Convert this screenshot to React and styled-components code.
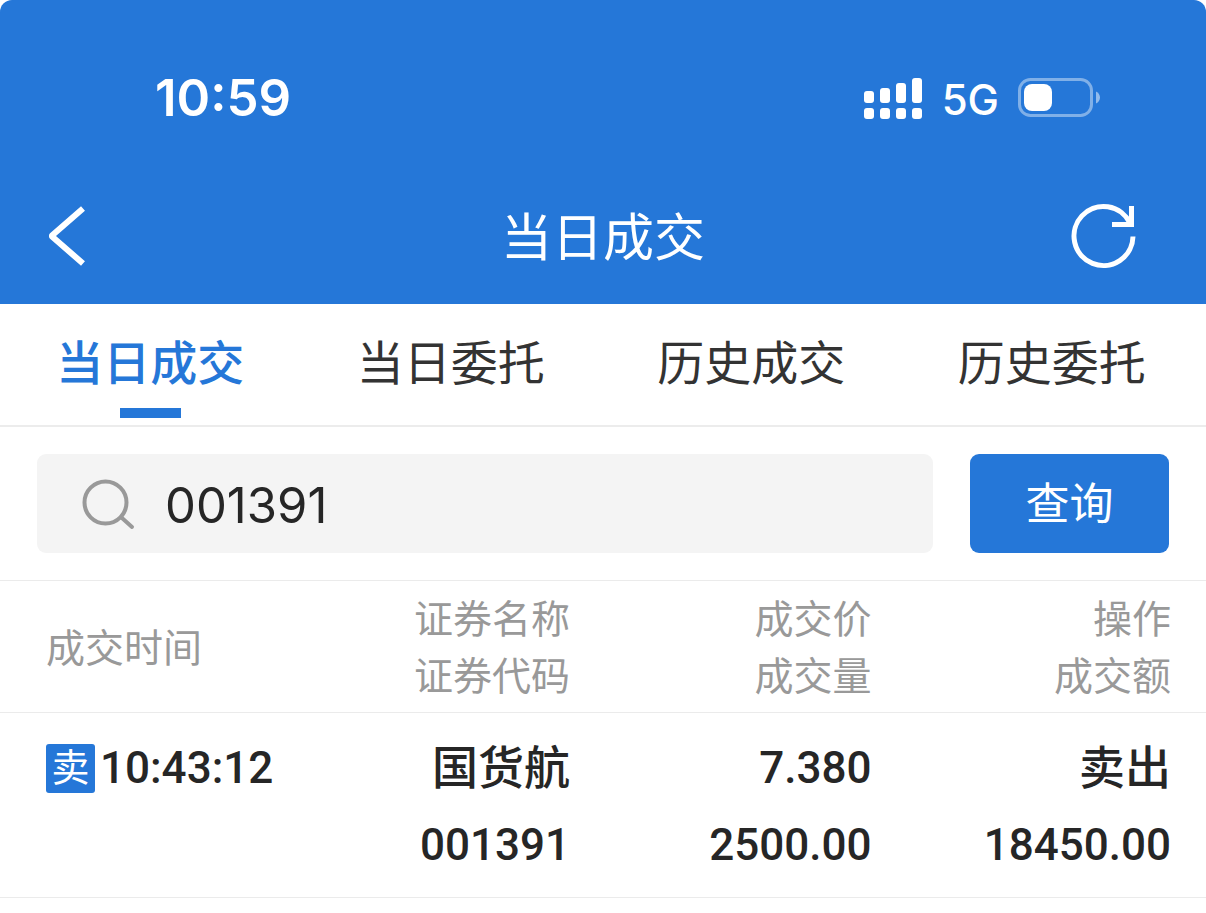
import React, { useState } from "react";
import styled, { createGlobalStyle } from "styled-components";

const blue = "#2577d8";
const cjk = '"Noto Sans CJK SC", sans-serif';

const GlobalStyle = createGlobalStyle`
  * { box-sizing: border-box; }
  body { margin: 0; background: #fff; color: #262626; font-family: ${cjk}; }
  button, input { font: inherit; border: 0; padding: 0; margin: 0; background: none; color: inherit; }
  svg { display: block; flex: none; }
`;

const Header = styled.header`
  background: ${blue};
  color: #fff;
  border-radius: 12px 12px 0 0;
`;

const StatusBar = styled.div`
  display: flex;
  align-items: center;
  justify-content: space-between;
  height: 168px;
  padding: 28px 105px 0 155px;
  font-family: Inter, sans-serif;
`;

const Clock = styled.time`
  font-size: 51px;
  font-weight: 600;
  line-height: 60px;
`;

const Indicators = styled.div`
  display: flex;
  align-items: center;
  gap: 19px;
`;

const Network = styled.span`
  padding-top: 4px;
  font-size: 42px;
  font-weight: 500;
  line-height: 48px;
`;

const TitleBar = styled.div`
  display: flex;
  align-items: center;
  justify-content: space-between;
  height: 136px;
  padding: 0 68px 0 46px;
`;

const IconButton = styled.button`
  display: flex;
  flex: none;
  justify-content: ${(p) => (p.$end ? "flex-end" : "flex-start")};
  width: 88px;
  cursor: pointer;
`;

const Title = styled.h1`
  flex: 1;
  margin: 0;
  padding: 0 0 4px 22px;
  text-align: center;
  font-size: 51px;
  font-weight: 400;
  line-height: 72px;
`;

const Tabs = styled.nav`
  display: grid;
  grid-template-columns: repeat(4, 1fr);
  padding-right: 4px;
  border-bottom: 2px solid #ececec;
`;

const Tab = styled.a`
  display: flex;
  flex-direction: column;
  align-items: center;
  gap: 10px;
  height: 121px;
  padding-top: 24px;
  color: ${(p) => (p.$active ? blue : "#333")};
  font-size: 47px;
  font-weight: ${(p) => (p.$active ? 500 : 400)};
  line-height: 64px;
  text-decoration: none;

  &::after {
    content: "";
    width: 61px;
    height: 10px;
    margin-top: 6px;
    background: ${(p) => (p.$active ? blue : "transparent")};
  }
`;

const SearchForm = styled.form`
  display: flex;
  gap: 37px;
  padding: 27px 37px;
`;

const SearchBox = styled.label`
  display: flex;
  flex: 1;
  align-items: center;
  gap: 28px;
  min-width: 0;
  height: 99px;
  padding: 0 44px;
  border-radius: 9px;
  background: #f4f4f4;
`;

const SearchInput = styled.input`
  flex: 1;
  min-width: 0;
  height: 72px;
  padding-top: 3px;
  font-family: Inter, ${cjk};
  font-size: 49px;
  outline: none;
`;

const SubmitButton = styled.button`
  flex: none;
  width: 199px;
  padding-bottom: 5px;
  border-radius: 9px;
  background: ${blue};
  color: #fff;
  font-size: 44px;
  line-height: 66px;
  cursor: pointer;
`;

const Table = styled.table`
  width: 100%;
  table-layout: fixed;
  border-collapse: collapse;
`;

const Row = styled.tr`
  border-top: 1px solid #ebebeb;
  border-bottom: 1px solid #ebebeb;
`;

const HeadCell = styled.th`
  padding: 7px ${(p) => (p.$last ? 35 : 33)}px 10px 46px;
  color: #999;
  font-size: 39px;
  font-weight: 400;
  line-height: 57px;
  text-align: ${(p) => (p.$first ? "left" : "right")};
  white-space: nowrap;
`;

const Cell = styled.td`
  padding: 17px ${(p) => (p.$last ? 35 : 33)}px 13px ${(p) => (p.$first ? 46 : 0)}px;
  font-family: Roboto, ${cjk};
  font-size: 44px;
  font-weight: 500;
  line-height: 77px;
  text-align: ${(p) => (p.$first ? "left" : "right")};
  vertical-align: top;
  white-space: nowrap;
`;

const Line = styled.div``;

const NameLine = styled.div`
  padding-bottom: 8px;
  font-family: ${cjk};
  font-size: 46px;
  line-height: 69px;
`;

const TimeLine = styled.div`
  display: flex;
  align-items: center;
  gap: 5px;
  height: 77px;
`;

const SideBadge = styled.span`
  flex: none;
  width: 49px;
  height: 49px;
  border-radius: 3px;
  background: ${blue};
  color: #fff;
  font-family: ${cjk};
  font-size: 38px;
  font-weight: 400;
  line-height: 41px;
  text-align: center;
`;

const signalBars = [12, 15, 20, 25];

function Signal() {
  return (
    <svg width="60" height="42" viewBox="0 0 60 42" fill="currentColor" aria-hidden="true">
      {signalBars.map((h, i) => (
        <g key={h}>
          <rect x={1 + i * 16} y={26 - h} width="10" height={h} rx="3" />
          <rect x={1 + i * 16} y="31" width="10" height="11" rx="3" />
        </g>
      ))}
    </svg>
  );
}

function Battery() {
  return (
    <svg width="83" height="40" viewBox="0 0 83 40" aria-hidden="true">
      <rect x="1.5" y="1.5" width="72" height="36" rx="11" fill="none" stroke="#fff" strokeOpacity=".42" strokeWidth="3" />
      <rect x="6" y="6" width="28" height="27" rx="8" fill="#fff" />
      <path d="M78 13.500C80.500 14.500 82 17 82 19.500S80.500 24.500 78 25.500Z" fill="#fff" fillOpacity=".5" />
    </svg>
  );
}

function BackIcon() {
  return (
    <svg width="42" height="64" viewBox="0 0 42 64" fill="none" stroke="currentColor" strokeWidth="6" aria-hidden="true">
      <path d="M37 4.500 L6 31.500 V32.500 L37 59.500" strokeLinejoin="round" />
    </svg>
  );
}

function RefreshIcon() {
  return (
    <svg width="68" height="68" viewBox="0 0 68 68" fill="none" stroke="currentColor" strokeWidth="5" aria-hidden="true">
      <path d="M63 34.500 A29.500 29.500 0 1 1 60 21" />
      <path d="M61.500 4 V22.500 H42" />
    </svg>
  );
}

function SearchIcon() {
  return (
    <svg width="56" height="52" viewBox="0 0 56 52" fill="none" stroke="#999" strokeWidth="4" aria-hidden="true">
      <circle cx="24.500" cy="24.500" r="21" />
      <path d="M41 40 L51 49" strokeLinecap="round" />
    </svg>
  );
}

const tabs = ["当日成交", "当日委托", "历史成交", "历史委托"];
const headings = [["成交时间"], ["证券名称", "证券代码"], ["成交价", "成交量"], ["操作", "成交额"]];
const trades = [
  { side: "卖", time: "10:43:12", name: "国货航", code: "001391", price: "7.380", volume: "2500.00", action: "卖出", amount: "18450.00" },
];

export default function App() {
  const [code, setCode] = useState("001391");
  return (
    <>
      <GlobalStyle />
      <Header>
        <StatusBar>
          <Clock>10:59</Clock>
          <Indicators>
            <Signal />
            <Network>5G</Network>
            <Battery />
          </Indicators>
        </StatusBar>
        <TitleBar>
          <IconButton type="button" aria-label="返回"><BackIcon /></IconButton>
          <Title>当日成交</Title>
          <IconButton type="button" aria-label="刷新" $end><RefreshIcon /></IconButton>
        </TitleBar>
      </Header>
      <Tabs>
        {tabs.map((tab, i) => (
          <Tab key={tab} href="#" $active={i === 0} aria-current={i === 0 ? "page" : undefined}>{tab}</Tab>
        ))}
      </Tabs>
      <SearchForm onSubmit={(e) => e.preventDefault()}>
        <SearchBox>
          <SearchIcon />
          <SearchInput type="text" aria-label="证券代码" value={code} onChange={(e) => setCode(e.target.value)} />
        </SearchBox>
        <SubmitButton type="submit">查询</SubmitButton>
      </SearchForm>
      <Table>
        <thead>
          <Row>
            {headings.map((lines, i) => (
              <HeadCell key={lines[0]} scope="col" $first={i === 0} $last={i === 3}>
                {lines.map((line) => <Line key={line}>{line}</Line>)}
              </HeadCell>
            ))}
          </Row>
        </thead>
        <tbody>
          {trades.map((t) => (
            <Row key={t.time}>
              <Cell $first>
                <TimeLine><SideBadge>{t.side}</SideBadge>{t.time}</TimeLine>
              </Cell>
              <Cell><NameLine>{t.name}</NameLine><Line>{t.code}</Line></Cell>
              <Cell><Line>{t.price}</Line><Line>{t.volume}</Line></Cell>
              <Cell $last><NameLine>{t.action}</NameLine><Line>{t.amount}</Line></Cell>
            </Row>
          ))}
        </tbody>
      </Table>
    </>
  );
}
